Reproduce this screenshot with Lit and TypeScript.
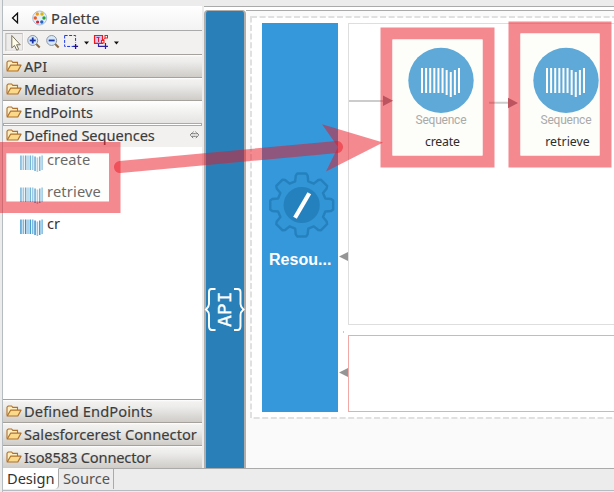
import { LitElement, html, svg, css } from "lit";
import { customElement, property } from "lit/decorators.js";

const folder = html`<svg class="folder" width="16" height="14" viewBox="0 0 16 14">
  <path d="M1 11.5V3.2L2.2 2H5.6L6.8 3.4H11.5V6" fill="#fbeec4" stroke="#b0712a" stroke-width="1.1"/>
  <path d="M1.2 12L4.6 6.2H15L11.8 12Z" fill="#fad98a" stroke="#b0712a" stroke-width="1.2" stroke-linejoin="round"/>
</svg>`;

const bars = (x: number, y: number, pitch: number, w: number, h: number, step: number, fills: string[]) =>
  [0, 0, 0, 0, 0, 0, 1, 2, 1, 0].map(
    (d, i) => svg`<rect x=${x + i * pitch} y=${y + d * step} width=${w} height=${h} fill=${fills[i % fills.length]}/>`
  );

@customElement("palette-drawer")
class PaletteDrawer extends LitElement {
  @property() label = "";
  @property({ type: Number }) spacing = 0;
  static styles = css`
    :host { display: block; height: 23px; flex: none; box-sizing: border-box; border-top: 1px solid #a5a29e;
      background: linear-gradient(#fff 0, #f2f1f0 2px, #ededec 30%, #cfccc8 100%); }
    :host([light]) { background: linear-gradient(#fff, #f4f4f3 40%, #e5e4e2); }
    :host([open]) { background: #f2f1f0; border-top: 1px solid #aaa; margin-top: 2px; height: 22px; box-shadow: 0 -2px 0 -1px #fff, 0 -2px 0 #aaa; }
    .row { display: flex; align-items: center; height: 22px; padding-left: 3px; gap: 2px; white-space: nowrap; }
    :host([open]) .row { height: 19px; }
    .folder { flex: none; }
    .label { font: 14.67px/20px "Noto Sans", sans-serif; color: #3c3c3c; -webkit-text-stroke: .15px #3c3c3c; }
    .pin { margin-left: auto; margin-right: 2px; }
  `;
  render() {
    return html`<div class="row">${folder}<span class="label" style="letter-spacing:${this.spacing}px">${this.label}</span>
      ${this.hasAttribute("open")
        ? html`<svg class="pin" width="11" height="8" viewBox="0 0 11 8"><path d="M4.5 .8L1 4L4.5 7.2M6.5 .8L10 4L6.5 7.2M3.3 2.7H7.7M3.3 5.3H7.7" fill="none" stroke="#555" stroke-width="1" stroke-dasharray="1.4 .5"/></svg>`
        : ""}</div>`;
  }
}

@customElement("sequence-entry")
class SequenceEntry extends LitElement {
  @property() label = "";
  @property({ type: Number }) spacing = 0;
  static styles = css`
    :host { display: flex; height: 32px; gap: 4px; padding-left: 17px; font: 14.67px/20px "Noto Sans", sans-serif; color: #333; }
    :host([muted]) { color: #383838; }
    svg { margin-top: 6px; flex: none; }
  `;
  render() {
    return html`<svg width="23" height="18" viewBox="0 0 23 18">${bars(0.2, 0.5, 2.35, 1.5, 14.5, 1, ["#4a9bd0", "#7db8de", "#3b90ca", "#8cc3e4"])}</svg
      ><span style="letter-spacing:${this.spacing}px">${this.label}</span>`;
  }
}

@customElement("app-root")
class AppRoot extends LitElement {
  static styles = css`
    :host { display: block; position: relative; width: 614px; height: 492px; overflow: hidden; background: #ececec; font-family: "Noto Sans", sans-serif; }
    * { box-sizing: border-box; }
    .shell { display: flex; flex-direction: column; height: 492px; padding-top: 6px; margin-left: 2px; border-left: 1px solid #b5bcc2; }
    .work { display: flex; height: 462px; }
    .palette { width: 199px; display: flex; flex-direction: column; background: #fff; }
    .title { display: flex; align-items: center; height: 25px; border-bottom: 1px solid #aaa; background: linear-gradient(#fff, #f3f3f3); padding-left: 8px; }
    .title .logo { margin-left: 13px; }
    .title span { font-size: 14.67px; line-height: 20px; margin-left: 3px; color: #3c3c3c; letter-spacing: .12px; -webkit-text-stroke: .15px #3c3c3c; }
    .tools { display: block; height: 23px; background: #f2f1f0; }
    .entries { height: 253px; padding-top: 2px; background: #fff; }
    .editor { flex: 1; display: flex; border-top: 1px solid #aaa; background: #fff; padding-top: 3px; margin-left: 2px; }
    .apibar { width: 42px; background: #2980b9; border: 2px solid #b0aeac; border-bottom: 0; border-top-width: 1px; border-radius: 4px 4px 0 0; }
    .canvas { flex: 1; background: #fafafa; border-top: 1px solid #aaa; }
    .tabs { display: flex; height: 22px; font-size: 14.67px; color: #333; }
    .tab { line-height: 19px; border-right: 1px solid #aaa; border-top: 1px solid #aaa; padding-left: 4px; height: 21px; white-space: nowrap; }
    .design { width: 56px; background: #fff; border-top-color: #fff; border-radius: 0 0 4px 0; letter-spacing: -.05px; }
    .source { width: 55px; color: #555; letter-spacing: 0; }
    .rest { flex: 1; border-top: 1px solid #aaa; }
    .foot { flex: 1; border-top: 1px solid #b5bcc2; }
    .diagram { position: absolute; left: 0; top: 0; }
    .res { font: bold 16px "Liberation Sans", sans-serif; fill: #fff; }
    .kind { font: 12px Roboto, sans-serif; fill: #aaa; }
    .name { font: 12.3px "Noto Sans", sans-serif; fill: #2c2c2c; }
    .api { font: 18px "DejaVu Sans Mono", monospace; fill: #fff; stroke: #fff; stroke-width: .3px; }
  `;

  private node(cx: number, name: string, w: number) {
    return svg`<circle cx=${cx} cy="80.4" r="32.7" fill="#5ea9d7"/>
      ${bars(cx - 20, 68, 4.11, 2, 25, 2, ["#fff"])}
      <text class="kind" x=${cx - 25.5} y="124.4" textLength="51">Sequence</text>
      <text class="name" x=${cx - w / 2 + 1.5} y="146" textLength=${w}>${name}</text>`;
  }

  private gear() {
    const pts: string[] = [];
    for (let i = 0; i < 8; i++) {
      const a = (i * Math.PI) / 4;
      for (const [r, o] of [[24.5, -0.27], [30, -0.2], [31.8, -0.14], [31.8, 0.14], [30, 0.2], [24.5, 0.27]]) {
        pts.push(`${(301.7 + r * Math.cos(a + o)).toFixed(2)},${(205 + r * Math.sin(a + o)).toFixed(2)}`);
      }
    }
    return svg`<polygon points=${pts.join(" ")} fill="#3295d5" stroke="#2581be" stroke-width="2.4" stroke-linejoin="round"/>
      <circle cx="301.7" cy="205" r="18.1" fill="#2581be"/>
      <path d="M295 217.7L309.3 193.3" stroke="#fff" stroke-width="4.2"/>`;
  }

  render() {
    return html`
      <div class="shell">
        <div class="work">
          <div class="palette">
            <div class="title">
              <svg width="8" height="12" viewBox="0 0 8 12"><path d="M6.5 1.2V10.8L1.5 6Z" fill="#fff" stroke="#111" stroke-width="1.3"/></svg>
              <svg class="logo" width="16" height="16" viewBox="0 0 16 16">
                <circle cx="7.7" cy="8" r="7" fill="#e2eefa" stroke="#a9bfd6"/>
                <circle cx="5.3" cy="4" r="1.7" fill="#f09a18"/><circle cx="10" cy="4" r="1.7" fill="#d8b70a"/>
                <circle cx="3.3" cy="8" r="1.7" fill="#f05a20"/><circle cx="12" cy="8" r="1.7" fill="#27a52b"/>
                <circle cx="5.6" cy="12" r="1.6" fill="#d12435"/><circle cx="9.8" cy="12" r="1.7" fill="#2264c8"/>
              </svg>
              <span>Palette</span>
            </div>
            <svg class="tools" width="199" height="23" viewBox="3 31 199 23">
              <rect x="5.5" y="33.5" width="17" height="17" fill="#eeecea" stroke="#bbb8b4"/><path d="M6 51H23V33" fill="none" stroke="#fff"/>
              <path d="M11.5 35.5V48L14.2 45.5L16.5 50.3L18.4 49.3L16.3 44.8H20Z" fill="#fffce8" stroke="#77715e"/>
              ${[32.5, 51.5].map((x) => svg`<path d="M${x + 3.5} 44L${x + 7} 47.5" stroke="#8c6a45" stroke-width="2"/><circle cx=${x} cy="40.5" r="5" fill="#d5e7fa" stroke="#8e979f"/><path d="M${x - 3} 40.5H${x + 3}" stroke="#1830a0" stroke-width="1.8"/>`)}
              <path d="M32.5 37.5V43.5" stroke="#1830a0" stroke-width="1.8"/>
              <path d="M64.5 35.5H75.5V43M64.5 35.5V46.5H73" fill="none" stroke="#1937f0" stroke-dasharray="3 1.5"/>
              <path d="M73 46.5H78M75.5 44V49" stroke="#25108c" stroke-width="1.3"/>
              <path d="M84 41.5H89L86.5 44.5ZM114 41.5H119L116.5 44.5Z" fill="#111"/>
              <path d="M98.5 44V46.5H103M105.5 43V49M103 46.5H108" fill="none" stroke="#3020a0" stroke-width="1.2"/>
              <path d="M94.5 35.5H102.5V43.5H94.5Z" fill="#ccc8ff" stroke="#f01818" stroke-width="1.2"/>
              <path d="M96.5 37.5H99.5M98.5 38V42M101 42L106.5 37" stroke="#e01535" fill="none"/><rect x="101.5" y="40.5" width="2.5" height="2.5" fill="#fff" stroke="#f01818"/><rect x="105" y="35.5" width="2.5" height="2.5" fill="#fff" stroke="#f01818"/>
            </svg>
            <palette-drawer label="API"></palette-drawer>
            <palette-drawer label="Mediators"></palette-drawer>
            <palette-drawer light label="EndPoints"></palette-drawer>
            <palette-drawer open label="Defined Sequences" .spacing=${-0.07}></palette-drawer>
            <div class="entries">
              <sequence-entry muted label="create" .spacing=${0.08}></sequence-entry>
              <sequence-entry muted label="retrieve" .spacing=${0.15}></sequence-entry>
              <sequence-entry label="cr"></sequence-entry>
            </div>
            <palette-drawer label="Defined EndPoints" .spacing=${0.1}></palette-drawer>
            <palette-drawer label="Salesforcerest Connector" .spacing=${0.03}></palette-drawer>
            <palette-drawer label="Iso8583 Connector" .spacing=${-0.18}></palette-drawer>
          </div>
          <div class="editor"><div class="apibar"></div><div class="canvas"></div></div>
        </div>
        <div class="tabs"><div class="tab design">Design</div><div class="tab source">Source</div><div class="rest"></div></div>
        <div class="foot"></div>
      </div>
      <svg class="diagram" width="614" height="492" viewBox="0 0 614 492">
        <rect x="251" y="17" width="380" height="401" fill="#fff" stroke="#e0e0e0" stroke-width="2" stroke-dasharray="6 2.6"/>
        <rect x="262" y="23" width="76" height="389" fill="#3598db"/>
        <rect x="348.5" y="23.5" width="280" height="301" fill="#fff" stroke="#dedede"/>
        <rect x="348.5" y="335.5" width="280" height="76" fill="#fff" stroke="#f1a9a6"/>
        <path d="M343.5 331V333" stroke="#bbb" stroke-width=".8"/>
        <path d="M339 256.5L348 252V261ZM339 372.5L348 368V377Z" fill="#959595"/>
        ${this.gear()}
        <text class="res" x="269" y="265" textLength="62.5">Resou...</text>
        <text class="api" transform="translate(231 327) rotate(-90)" textLength="35.5" lengthAdjust="spacingAndGlyphs">API</text>
        <path d="M215.5 289H211.5Q209 289 209 292V304Q209 307 206 309.5Q209 312 209 315V326Q209 330 212 330H215.5M234 289H237.5Q240.5 289 240.5 292V304Q240.5 307 243.5 309.5Q240.5 312 240.5 315V326Q240.5 330 237.5 330H234" fill="none" stroke="#fff" stroke-width="1.9"/>
        <path d="M349 101H383M489 102.8H509" stroke="#ccc" stroke-width="2"/>
        <path d="M6.3 153.3H109V201.5H6.3Z" fill="#fbfdf5" fill-opacity=".25"/>
        <g fill="rgb(233,22,33)" fill-opacity=".5">
          <path fill-rule="evenodd" d="M0 142H120.5V213H0ZM6.3 153.3V201.5H109V153.3Z"/>
          <path fill-rule="evenodd" d="M380.5 27.5H494.5V167.5H380.5ZM392.5 39.5V155.5H482.5V39.5Z"/>
          <path fill-rule="evenodd" d="M508.5 21.5H611.5V167.5H508.5ZM520.5 33.5V155.5H599.5V33.5Z"/>
          <path d="M322 124.3L383 142.5L326 171.5L338 147Z"/>
          <path d="M119.4 161L336.5 141A6 6 0 0 1 337.5 153L120.6 173A6 6 0 0 1 119.4 161Z"/>
        </g>
        <path d="M392.5 39.5H482.5V155.5H392.5ZM520.5 33.5H599.5V155.5H520.5Z" fill="#fdfef9"/>
        <path d="M383 95.5L393 100.8L383 106ZM508 97.8L518 103L508 108.3Z" fill="#bb545e"/>
        ${this.node(441, "create", 35)}
        ${this.node(566, "retrieve", 44.5)}
      </svg>`;
  }
}
